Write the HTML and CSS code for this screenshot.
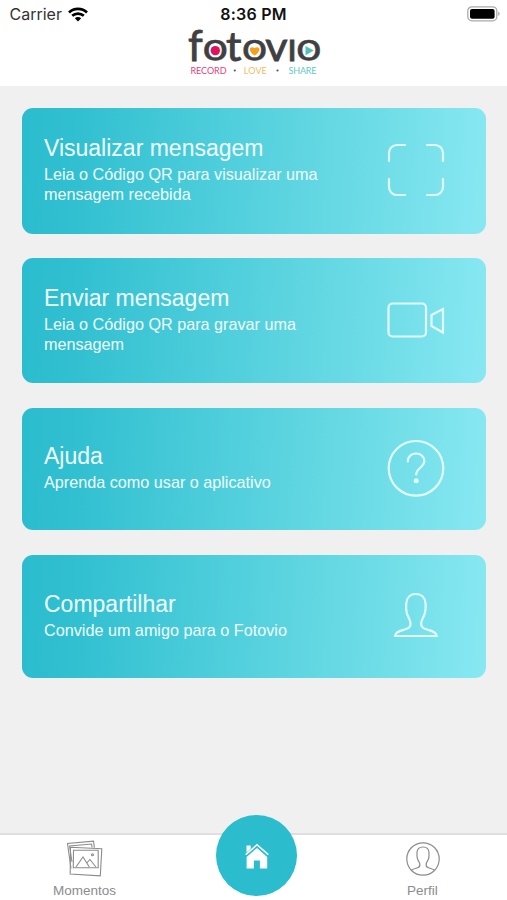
FILE: index.html
```html
<!DOCTYPE html>
<html lang="pt">
<head>
  <meta charset="UTF-8">
  <meta name="viewport" content="width=device-width, initial-scale=1.0">
  <title>Fotovio</title>
  <link rel="stylesheet" href="styles.css">
</head>
<body>

<header class="header">
  <div class="status-bar">
    <div class="carrier">
      <span>Carrier</span>
      <svg width="20" height="15" viewBox="0 0 20 15" fill="none" stroke="#000" stroke-width="2.7">
        <path d="M1 5.5C6 .7 14 .7 19 5.5"/>
        <path d="M4.2 8.8c3.3-3 8.3-3 11.6 0"/>
        <path d="M10 14.4 6.8 11.3c1.8-1.6 4.6-1.6 6.4 0z" fill="#000" stroke="none"/>
      </svg>
    </div>
    <span class="time">8:36 PM</span>
    <div class="battery">
      <svg width="34" height="16" viewBox="0 0 34 16">
        <rect x=".8" y=".8" width="29" height="14" rx="4" fill="none" stroke="#aaa" stroke-width="1.3"/>
        <rect x="3" y="3" width="24.6" height="9.8" rx="2" fill="#000"/>
        <path d="M31.2 5.6c2 .8 2 3.6 0 4.4z" fill="#aaa"/>
      </svg>
    </div>
  </div>
  <svg class="logo" width="134" height="50" viewBox="0 0 134 50">
    <g class="logo-name">
      <text transform="translate(1 33.4) scale(1.05 1.08)">f</text>
      <text class="round" transform="translate(15 32.2) scale(1.24 1)">o</text>
      <text transform="translate(39 33.4) scale(1.08 1)">t</text>
      <text class="round" transform="translate(54.300 32.2) scale(1.24 1)">o</text>
      <text transform="translate(78.300 33.4) scale(1.08 1)">v</text>
      <text x="100.300" y="33.4">ı</text>
      <text class="round" transform="translate(108.400 32.2) scale(1.24 1)">o</text>
    </g>
    <circle cx="28.300" cy="22.600" r="4.700" fill="#e0115f"/>
    <path d="M67.600 27.500c-8-5-4.500-10.500 0-7.400 4.500-3.100 8 2.400 0 7.400z" fill="#f5a11c"/>
    <path d="M118.500 18l8.300 4.600-8.300 4.600z" fill="#4fc0bd"/>
    <text class="tagline" x="3.5" y="46" textLength="36" fill="#e5417b">RECORD</text>
    <circle cx="47.8" cy="42.5" r="1.1" fill="#555"/>
    <text class="tagline" x="56.8" y="46" textLength="23" fill="#f3bd62">LOVE</text>
    <circle cx="90.5" cy="42.5" r="1.1" fill="#555"/>
    <text class="tagline" x="101.5" y="46" textLength="28" fill="#62c9c8">SHARE</text>
  </svg>
</header>

<main class="menu">
  <div class="card tall">
    <div class="card-text">
      <h2>Visualizar mensagem</h2>
      <p>Leia o Código QR para visualizar uma<br>mensagem recebida</p>
    </div>
    <svg class="card-icon" viewBox="0 0 58 58">
      <path d="M2 20v-8a8 8 0 0 1 8-8h8M40 4h8a8 8 0 0 1 8 8v8M56 38v8a8 8 0 0 1-8 8h-8M18 54h-8a8 8 0 0 1-8-8v-8"/>
    </svg>
  </div>

  <div class="card tall">
    <div class="card-text">
      <h2>Enviar mensagem</h2>
      <p>Leia o Código QR para gravar uma<br>mensagem</p>
    </div>
    <svg class="card-icon" viewBox="0 0 58 58">
      <rect x="1.5" y="12.5" width="37.5" height="33" rx="4"/>
      <path d="M44.5 24 56 18v23.5l-11.500-6.500z"/>
    </svg>
  </div>

  <div class="card">
    <div class="card-text">
      <h2>Ajuda</h2>
      <p>Aprenda como usar o aplicativo</p>
    </div>
    <svg class="card-icon" viewBox="0 0 58 58">
      <circle cx="29" cy="29.3" r="27.3"/>
      <path d="M20.800 22.500c0-5 3.700-8 8.300-8 5 0 8.200 3.300 8.200 7.600 0 6.300-8.100 7-8.100 13.400"/>
      <circle cx="29.2" cy="41.8" r="2.5" fill="#e3fcff" stroke="none"/>
    </svg>
  </div>

  <div class="card">
    <div class="card-text">
      <h2>Compartilhar</h2>
      <p>Convide um amigo para o Fotovio</p>
    </div>
    <svg class="card-icon" viewBox="0 0 58 58">
      <path d="M8 50c0-4 5-5 9-6.200 5-1.500 7-3 6.500-7-.3-3.500-2.500-5.500-3.700-9.500-.8-3-.8-6-.6-9.500.3-6 4-9.800 9.600-9.800s9.500 3.800 9.800 9.800c.2 3.500.2 6.500-.7 9.500-1.200 4-3.400 6-3.700 9.500-.4 4 1.500 5.500 6.500 7 4 1.200 9 2.200 9 6.200z"/>
    </svg>
  </div>
</main>

<nav class="tab-bar">
  <a class="tab">
    <svg width="38" height="38" viewBox="0 0 38 38" fill="none" stroke="#8c8c8e" stroke-width="1.1">
      <path d="M5 28.500 1.500 3.500l26-2.300.9 6.500"/>
      <path d="M6 22 3.600 6l22-2 .5 3.500"/>
      <path d="M4.500 7.300l31.300 1.500-1.500 27L4.200 34z"/>
      <path d="M7.500 10.300h24.700v17.500H7.300z"/>
      <path d="M10 27l7-10 6.300 10M20.700 23l3.200-3.500 6 7.500"/>
      <circle cx="26.5" cy="14.7" r="1"/>
    </svg>
    <span>Momentos</span>
  </a>
  <a class="home">
    <svg width="26" height="26" viewBox="0 0 26 26" fill="#fff">
      <path d="M2.500 2.500h4.200v3.200L2.500 9.500z"/>
      <path d="M1.700 11.600 13 1.800l11.300 9.800" fill="none" stroke="#fff" stroke-width="1.5"/>
      <path d="M13 5 2.600 14v11.500h7.300v-8h6v8h7.300V14z"/>
    </svg>
  </a>
  <a class="tab">
    <svg width="38" height="38" viewBox="0 0 38 38" fill="none" stroke="#8c8c8e" stroke-width="1.2">
      <circle cx="19" cy="19" r="16.2"/>
      <path d="M7 30.500c1.800-1.500 4.500-2 6.500-2.700 2.200-.8 2.700-2 2.300-4-.3-1.800-1.800-3-2.400-5.300-.5-2-.5-4-.4-6 .2-3.600 2.600-5.500 6-5.500s5.800 1.900 6 5.500c.1 2 .1 4-.4 6-.6 2.300-2.100 3.500-2.400 5.300-.4 2 .1 3.200 2.300 4 2 .7 4.700 1.200 6.500 2.700"/>
    </svg>
    <span>Perfil</span>
  </a>
</nav>

</body>
</html>
```

FILE: styles.css
```css
body {
  font-family: "Liberation Sans", Arial, sans-serif;
  background-color: #f0f0f0;
  margin: 0;
  height: 900px;
  display: flex;
  flex-direction: column;
  overflow: hidden;
}

.header {
  background: #fff;
  height: 86px;
}

.status-bar {
  height: 28px;
  display: grid;
  grid-template-columns: 1fr auto 1fr;
  align-items: center;
  font-family: Inter, sans-serif;
  font-size: 16px;
  color: #333;
}

.carrier {
  display: flex;
  align-items: center;
  gap: 6px;
  padding-left: 9.5px;
}

.time {
  color: #111;
  font-weight: 600;
  letter-spacing: 0.2px;
}

.battery {
  display: flex;
  justify-content: flex-end;
  padding-right: 6px;
}

.logo {
  display: block;
  margin: 0 auto;
  overflow: visible;
}

.logo-name {
  font-family: Lato, sans-serif;
  font-size: 40px;
  fill: #404043;
  stroke: #404043;
  stroke-width: 0.8px;
}

.logo-name .round {
  font-family: "DejaVu Sans", sans-serif;
  font-size: 35px;
  stroke-width: 0.4px;
}

.tagline {
  font-family: Lato, sans-serif;
  font-size: 9px;
}

.menu {
  flex: 1;
  display: flex;
  flex-direction: column;
  gap: 24.5px;
  padding: 22.3px 21.5px 0 22px;
}

.card {
  box-sizing: border-box;
  height: 122.6px;
  display: flex;
  justify-content: space-between;
  align-items: center;
  padding: 0 41px 2px 22px;
  border-radius: 11px;
  background: linear-gradient(93deg, #2bbccd 0%, #2fbfd0 10%, #6fdde7 77%, #88e8f2 100%);
  color: #f0feff;
}

.card.tall {
  height: 125.3px;
}

.card h2 {
  margin: 0 0 2px;
  font-size: 23px;
  font-weight: normal;
  line-height: 28px;
}

.card p {
  margin: 0 0 1px;
  font-size: 16.2px;
  line-height: 20.5px;
}

.card-icon {
  width: 58px;
  height: 58px;
  fill: none;
  stroke: #e3fcff;
  stroke-width: 2.2;
  stroke-linecap: round;
}

.tab-bar {
  box-sizing: border-box;
  height: 67px;
  display: grid;
  grid-template-columns: 1fr 1fr 1fr;
  justify-items: center;
  background: #fff;
  border-top: 2px solid #dfdfdf;
}

.tab {
  display: flex;
  flex-direction: column;
  align-items: center;
  padding-top: 5px;
  font-size: 13.5px;
  color: #8c8c8e;
}

.tab span {
  margin-top: 5px;
  line-height: 16px;
}

.home {
  width: 81px;
  height: 81px;
  margin-top: -20px;
  margin-left: 6px;
  border-radius: 50%;
  background: #2bbccd;
  display: flex;
  justify-content: center;
  align-items: center;
}
```
